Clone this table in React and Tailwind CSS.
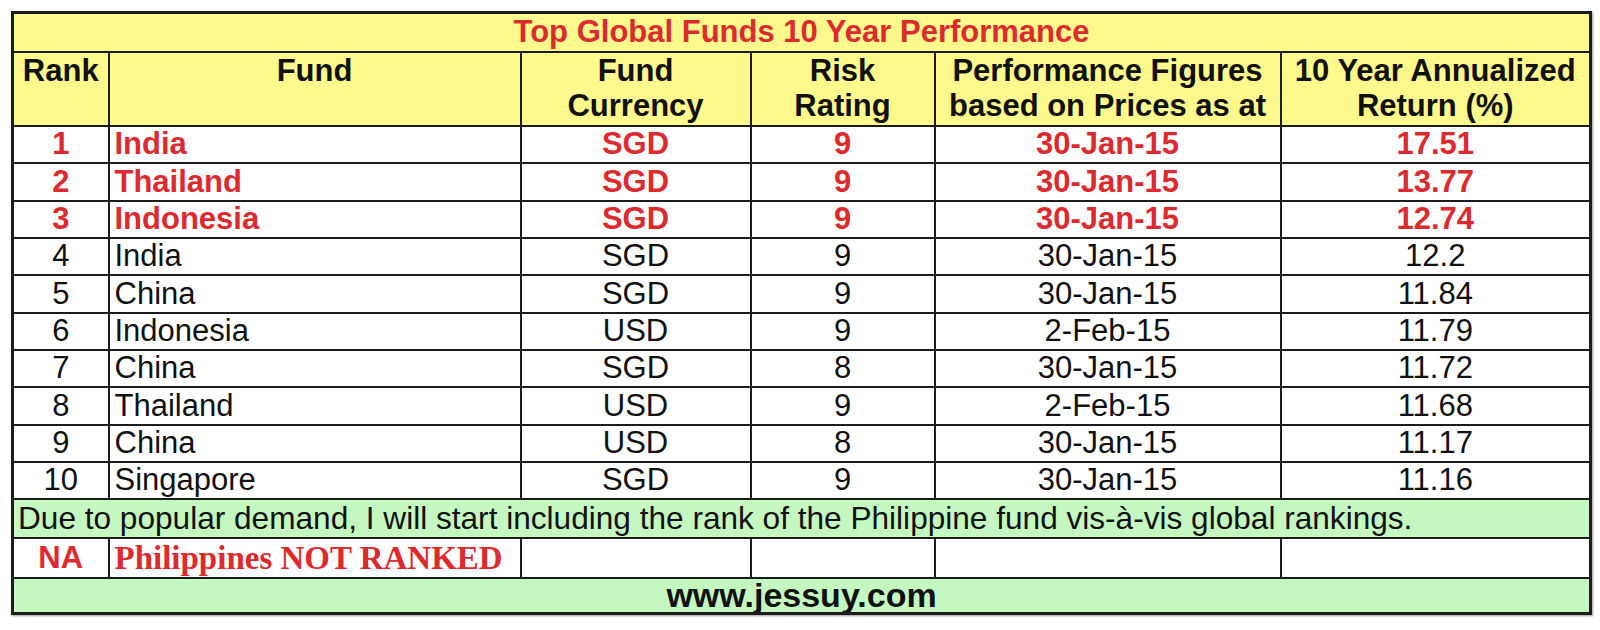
import React from "react";

const rows = [
  { rank: "1", fund: "India", cur: "SGD", risk: "9", date: "30-Jan-15", ret: "17.51", top: true },
  { rank: "2", fund: "Thailand", cur: "SGD", risk: "9", date: "30-Jan-15", ret: "13.77", top: true },
  { rank: "3", fund: "Indonesia", cur: "SGD", risk: "9", date: "30-Jan-15", ret: "12.74", top: true },
  { rank: "4", fund: "India", cur: "SGD", risk: "9", date: "30-Jan-15", ret: "12.2" },
  { rank: "5", fund: "China", cur: "SGD", risk: "9", date: "30-Jan-15", ret: "11.84" },
  { rank: "6", fund: "Indonesia", cur: "USD", risk: "9", date: "2-Feb-15", ret: "11.79" },
  { rank: "7", fund: "China", cur: "SGD", risk: "8", date: "30-Jan-15", ret: "11.72" },
  { rank: "8", fund: "Thailand", cur: "USD", risk: "9", date: "2-Feb-15", ret: "11.68" },
  { rank: "9", fund: "China", cur: "USD", risk: "8", date: "30-Jan-15", ret: "11.17" },
  { rank: "10", fund: "Singapore", cur: "SGD", risk: "9", date: "30-Jan-15", ret: "11.16" },
];

const cell = "border-2 border-[#1c1c1c] p-0 whitespace-nowrap overflow-hidden";

export default function App() {
  return (
    <div className="w-[1600px] h-[630px] bg-white pt-[11px] pl-[11px]">
      <table
        className="table-fixed border-collapse border-[3px] border-[#1c1c1c] text-[31px] text-[#111] shadow-[1px_1px_2px_rgba(0,0,0,0.4)]"
        style={{ fontFamily: '"Liberation Sans", Arial, sans-serif', width: 1578 }}
      >
        <colgroup>
          <col className="w-[96px]" />
          <col className="w-[412px]" />
          <col className="w-[230px]" />
          <col className="w-[184px]" />
          <col className="w-[346px]" />
          <col className="w-[310px]" />
        </colgroup>
        <tbody>
          {/* title */}
          <tr className="h-[39px] bg-[#fdf98c]">
            <td colSpan={6} className={`${cell} text-center font-bold text-[#dc2a2e] leading-[36px]`}>
              Top Global Funds 10 Year Performance
            </td>
          </tr>

          {/* header */}
          <tr className="h-[74px] bg-[#fdf98c] font-bold leading-[35px] text-center align-top">
            <td className={cell}>Rank</td>
            <td className={cell}>Fund</td>
            <td className={cell}>Fund<br />Currency</td>
            <td className={cell}>Risk<br />Rating</td>
            <td className={cell}>Performance Figures<br />based on Prices as at</td>
            <td className={cell}>10 Year Annualized<br />Return (%)</td>
          </tr>

          {rows.map((r, i) => (
            <tr
              key={r.rank}
              className={`${i % 3 === 1 ? "h-[38px]" : "h-[37px]"} bg-white leading-[34px] ${r.top ? "font-bold text-[#dc2a2e]" : ""}`}
            >
              <td className={`${cell} text-center`}>{r.rank}</td>
              <td className={`${cell} pl-[5px]`}>{r.fund}</td>
              <td className={`${cell} text-center`}>{r.cur}</td>
              <td className={`${cell} text-center`}>{r.risk}</td>
              <td className={`${cell} text-center`}>{r.date}</td>
              <td className={`${cell} text-center`}>{r.ret}</td>
            </tr>
          ))}

          {/* note about philippines */}
          <tr className="h-[39px] bg-[#c5f7c0] leading-[34px]">
            <td colSpan={6} className={`${cell} pl-[4px] text-[31.6px]`}>
              Due to popular demand, I will start including the rank of the Philippine fund vis-à-vis global rankings.
            </td>
          </tr>

          <tr className="h-[40px] bg-white leading-[34px]">
            <td className={`${cell} text-center font-bold text-[#dc2a2e]`}>NA</td>
            <td
              className={`${cell} pl-[5px] font-bold text-[#dc2a2e] text-[33px]`}
              style={{ fontFamily: '"Liberation Serif", "Times New Roman", serif' }}
            >
              Philippines NOT RANKED
            </td>
            <td className={cell}></td>
            <td className={cell}></td>
            <td className={cell}></td>
            <td className={cell}></td>
          </tr>

          {/* footer */}
          <tr className="h-[36px] bg-[#c5f7c0]">
            <td colSpan={6} className={`${cell} text-center font-bold leading-[32px] text-[34px]`}>
              www.jessuy.com
            </td>
          </tr>
        </tbody>
      </table>
    </div>
  );
}
